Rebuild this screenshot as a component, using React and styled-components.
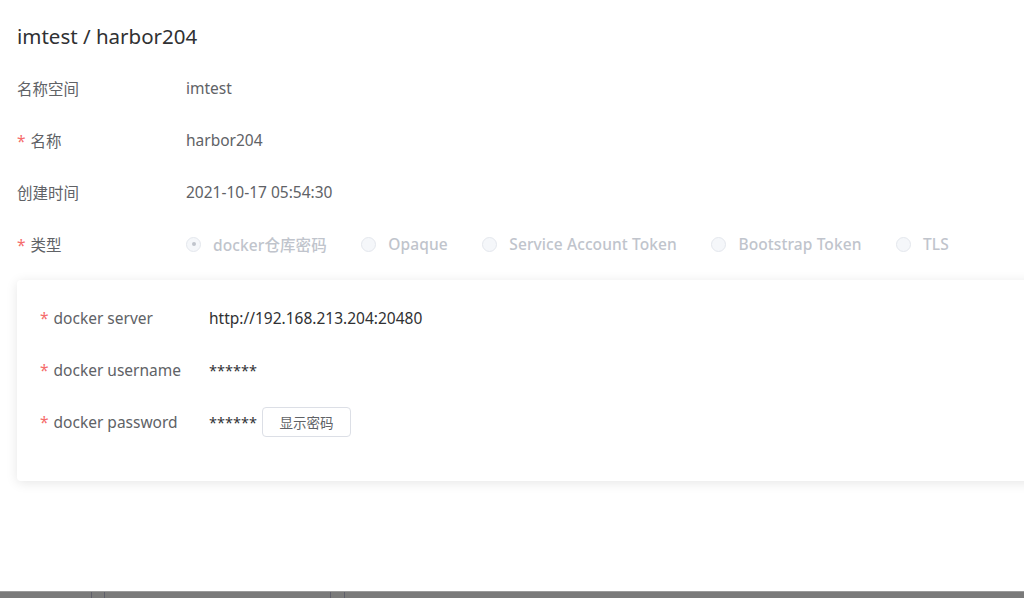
import React from 'react';
import styled, { createGlobalStyle } from 'styled-components';

const fontStack = `"Noto Sans", "Noto Sans CJK SC", sans-serif`;

const GlobalStyle = createGlobalStyle`
  html, body {
    margin: 0;
    padding: 0;
    background: #ffffff;
    overflow: hidden;
  }
  body {
    font-family: ${fontStack};
  }
`;

const Page = styled.div`
  display: flex;
  flex-direction: column;
  height: 598px;
  width: 1024px;
  overflow: hidden;
`;

const Content = styled.div`
  flex: 1;
  padding: 22px 0 0 17px;
`;

const Title = styled.h1`
  margin: 0 0 12px;
  font-size: 20.5px;
  line-height: 28px;
  font-weight: 400;
  color: #303133;
`;

const Row = styled.div`
  display: flex;
  align-items: center;
  height: 52px;
  font-size: 15.5px;
`;

const Label = styled.div`
  width: 169px;
  flex-shrink: 0;
  color: #606266;
`;

const Required = styled.span`
  color: #f56c6c;
  margin-right: 5px;
`;

const Value = styled.div`
  color: ${(p) => (p.dark ? '#303133' : '#606266')};
  display: flex;
  align-items: center;
`;

const RadioGroup = styled.div`
  display: flex;
  align-items: center;
  gap: 34.5px;
`;

const Radio = styled.label`
  display: flex;
  align-items: center;
  gap: 12px;
  color: #c0c4cc;
  font-weight: 500;
  letter-spacing: 0.1px;
  white-space: nowrap;
`;

const RadioCircle = styled.span`
  width: 15px;
  height: 15px;
  box-sizing: border-box;
  border-radius: 50%;
  border: 1px solid #e4e7ed;
  background: #f5f7fa;
  display: flex;
  align-items: center;
  justify-content: center;

  &::after {
    content: '';
    width: 4px;
    height: 4px;
    border-radius: 50%;
    background: ${(p) => (p.checked ? '#c0c4cc' : 'transparent')};
  }
`;

const Card = styled.div`
  margin-top: 10px;
  width: 1040px;
  padding: 12px 0 33px 23px;
  background: #ffffff;
  border-radius: 4px;
  box-shadow: 0 2px 12px 0 rgba(0, 0, 0, 0.1);
`;

const Masked = styled.span`
  font-size: 14.5px;
`;

const Button = styled.button`
  margin-left: 5px;
  width: 89px;
  height: 30px;
  border: 1px solid #dcdfe6;
  border-radius: 4px;
  background: #ffffff;
  color: #606266;
  font-family: ${fontStack};
  font-size: 13.5px;
  padding: 0;
`;

const BottomBar = styled.div`
  height: 6px;
  background: #7a7a7a;
  border-top: 1px solid #9a9a9a;
  display: flex;
`;

const BarSegment = styled.div`
  width: ${(p) => p.w}px;
  flex-shrink: 0;
  border-right: 1px solid #5f5f6a;
`;

const types = [
  { name: 'docker仓库密码', checked: true },
  { name: 'Opaque' },
  { name: 'Service Account Token' },
  { name: 'Bootstrap Token' },
  { name: 'TLS' },
];

export default function App() {
  return (
    <Page>
      <GlobalStyle />
      <Content>
        <Title>imtest / harbor204</Title>
        <Row>
          <Label>名称空间</Label>
          <Value>imtest</Value>
        </Row>
        <Row>
          <Label>
            <Required>*</Required>名称
          </Label>
          <Value>harbor204</Value>
        </Row>
        <Row>
          <Label>创建时间</Label>
          <Value>2021-10-17 05:54:30</Value>
        </Row>
        <Row>
          <Label>
            <Required>*</Required>类型
          </Label>
          <RadioGroup>
            {types.map((t) => (
              <Radio key={t.name}>
                <RadioCircle checked={t.checked} />
                {t.name}
              </Radio>
            ))}
          </RadioGroup>
        </Row>
        <Card>
          <Row>
            <Label>
              <Required>*</Required>docker server
            </Label>
            <Value dark>http://192.168.213.204:20480</Value>
          </Row>
          <Row>
            <Label>
              <Required>*</Required>docker username
            </Label>
            <Value dark>
              <Masked>******</Masked>
            </Value>
          </Row>
          <Row>
            <Label>
              <Required>*</Required>docker password
            </Label>
            <Value dark>
              <Masked>******</Masked>
              <Button>显示密码</Button>
            </Value>
          </Row>
        </Card>
      </Content>
      <BottomBar>
        <BarSegment w={91} />
        <BarSegment w={12} />
        <BarSegment w={225} />
        <BarSegment w={13} />
      </BottomBar>
    </Page>
  );
}
